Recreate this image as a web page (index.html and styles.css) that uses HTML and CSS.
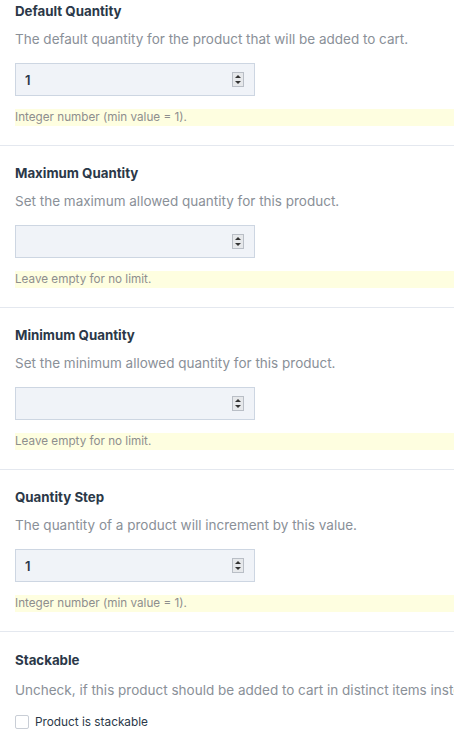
FILE: index.html
```html
<!DOCTYPE html>
<html>
<head>
<meta charset="utf-8">
<link rel="stylesheet" href="styles.css">
</head>
<body>
<div class="page">
  <section class="field">
    <h3 class="title">Default Quantity</h3>
    <p class="desc">The default quantity for the product that will be added to cart.</p>
    <div class="num"><input class="num-input" type="text" value="1"><span class="spin"><span class="up"></span><span class="down"></span></span></div>
    <div class="hint">Integer number (min value = 1).</div>
  </section>
  <section class="field">
    <h3 class="title">Maximum Quantity</h3>
    <p class="desc">Set the maximum allowed quantity for this product.</p>
    <div class="num"><input class="num-input" type="text" value=""><span class="spin"><span class="up"></span><span class="down"></span></span></div>
    <div class="hint">Leave empty for no limit.</div>
  </section>
  <section class="field">
    <h3 class="title">Minimum Quantity</h3>
    <p class="desc">Set the minimum allowed quantity for this product.</p>
    <div class="num"><input class="num-input" type="text" value=""><span class="spin"><span class="up"></span><span class="down"></span></span></div>
    <div class="hint">Leave empty for no limit.</div>
  </section>
  <section class="field">
    <h3 class="title">Quantity Step</h3>
    <p class="desc">The quantity of a product will increment by this value.</p>
    <div class="num"><input class="num-input" type="text" value="1"><span class="spin"><span class="up"></span><span class="down"></span></span></div>
    <div class="hint">Integer number (min value = 1).</div>
  </section>
  <section class="field">
    <h3 class="title">Stackable</h3>
    <p class="desc">Uncheck, if this product should be added to cart in distinct items instead of increasing the quantity.</p>
    <label class="check"><span class="box"></span><span class="check-label">Product is stackable</span></label>
  </section>
</div>
</body>
</html>
```
FILE: styles.css
```css
html, body {
  margin: 0;
  padding: 0;
  background: #ffffff;
  overflow: hidden;
}
body {
  font-family: Inter, "Noto Sans", sans-serif;
  width: 454px;
  height: 750px;
}
.page {
  display: flex;
  flex-direction: column;
}
.field {
  padding: 17px 0 19px 15px;
  border-bottom: 1px solid #e4e8ef;
  display: flex;
  flex-direction: column;
  align-items: flex-start;
  overflow: hidden;
}
.field:first-child {
  padding-top: 1px;
}
.field:last-child {
  border-bottom: none;
  padding-top: 18px;
}
.title {
  margin: 0;
  font-size: 13.3px;
  line-height: 20px;
  font-weight: 700;
  color: #2b3848;
}
.desc {
  margin: 8px 0 0;
  font-size: 13.5px;
  line-height: 20px;
  color: #8a9098;
  white-space: nowrap;
}
.field:last-child .desc {
  margin-top: 10px;
}
.num {
  margin-top: 14px;
  box-sizing: border-box;
  width: 240px;
  height: 33px;
  background: #f0f3f8;
  border: 1px solid #cdd6e2;
  display: flex;
  align-items: center;
  padding: 0 10px 0 9px;
}
.num-input {
  flex: 1;
  min-width: 0;
  border: none;
  background: transparent;
  font-family: Inter, "Noto Sans", sans-serif;
  font-size: 13px;
  font-weight: 600;
  color: #2b3848;
  padding: 0;
  outline: none;
}
.spin {
  box-sizing: border-box;
  width: 12px;
  height: 15px;
  border: 1px solid #b9bec6;
  background: #e6e8eb;
  display: flex;
  flex-direction: column;
  align-items: center;
  justify-content: space-between;
  padding: 2px 0;
}
.up, .down {
  width: 0;
  height: 0;
  border-left: 3px solid transparent;
  border-right: 3px solid transparent;
}
.up {
  border-bottom: 3px solid #333;
}
.down {
  border-top: 3px solid #333;
}
.hint {
  margin-top: 13px;
  align-self: stretch;
  height: 17px;
  line-height: 17px;
  background: #fefee0;
  font-size: 11.7px;
  color: #8e8e8e;
  white-space: nowrap;
}
.check {
  margin-top: 15px;
  display: flex;
  align-items: center;
  gap: 6px;
}
.box {
  box-sizing: border-box;
  width: 14px;
  height: 14px;
  border: 1px solid #c9ced6;
  border-radius: 2px;
  background: #fff;
}
.check-label {
  font-size: 11.8px;
  color: #2b3848;
}
```
